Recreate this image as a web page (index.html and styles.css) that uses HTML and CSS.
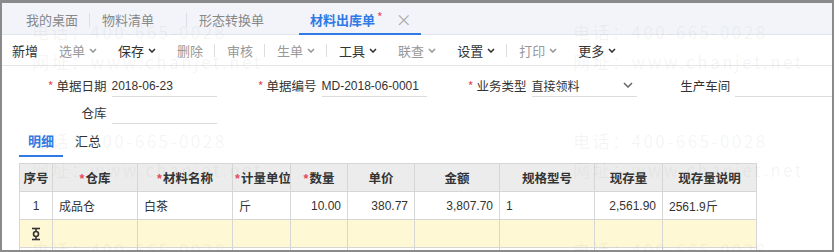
FILE: index.html
```html
<!DOCTYPE html>
<html lang="zh-CN">
<head>
  <meta charset="UTF-8">
  <meta name="viewport" content="width=device-width, initial-scale=1.0">
  <title>材料出库单</title>
  <link rel="stylesheet" href="styles.css">
</head>
<body>
  <div class="frame">
    <div class="tabs">
      <div class="tab first">我的桌面</div>
      <div class="tab sep">物料清单</div>
      <div class="tab sep">形态转换单</div>
      <div class="tab active">材料出库单<span class="dot">*</span><span class="close">×</span></div>
    </div>

    <div class="toolbar">
      <span class="btn">新增</span>
      <span class="btn off">选单<svg class="chev" viewBox="0 0 8 5"><polyline points="1,1 4,4 7,1"/></svg></span>
      <span class="btn">保存<svg class="chev" viewBox="0 0 8 5"><polyline points="1,1 4,4 7,1"/></svg></span>
      <span class="btn off">删除</span>
      <span class="bar"></span>
      <span class="btn off">审核</span>
      <span class="bar"></span>
      <span class="btn off">生单<svg class="chev" viewBox="0 0 8 5"><polyline points="1,1 4,4 7,1"/></svg></span>
      <span class="bar"></span>
      <span class="btn">工具<svg class="chev" viewBox="0 0 8 5"><polyline points="1,1 4,4 7,1"/></svg></span>
      <span class="btn off">联查<svg class="chev" viewBox="0 0 8 5"><polyline points="1,1 4,4 7,1"/></svg></span>
      <span class="btn">设置<svg class="chev" viewBox="0 0 8 5"><polyline points="1,1 4,4 7,1"/></svg></span>
      <span class="bar"></span>
      <span class="btn off">打印<svg class="chev" viewBox="0 0 8 5"><polyline points="1,1 4,4 7,1"/></svg></span>
      <span class="btn">更多<svg class="chev" viewBox="0 0 8 5"><polyline points="1,1 4,4 7,1"/></svg></span>
    </div>

    <div class="form">
      <div class="row">
        <div class="field">
          <label><i>*</i>单据日期</label>
          <div class="input">2018-06-23</div>
        </div>
        <div class="field">
          <label><i>*</i>单据编号</label>
          <div class="input">MD-2018-06-0001</div>
        </div>
        <div class="field">
          <label><i>*</i>业务类型</label>
          <div class="input select">直接领料<svg class="drop" viewBox="0 0 10 6"><polyline points="1,1 5,5 9,1"/></svg></div>
        </div>
        <div class="field">
          <label>生产车间</label>
          <div class="input wide"></div>
        </div>
      </div>
      <div class="row">
        <div class="field">
          <label>仓库</label>
          <div class="input"></div>
        </div>
      </div>
    </div>

    <div class="subtabs">
      <span class="subtab current">明细</span>
      <span class="subtab">汇总</span>
    </div>

    <table class="grid">
      <colgroup>
        <col style="width:33px"><col style="width:85px"><col style="width:95px"><col style="width:58px"><col style="width:57px">
        <col style="width:67px"><col style="width:85px"><col style="width:95px"><col style="width:68px"><col style="width:94px">
      </colgroup>
      <thead>
        <tr>
          <th>序号</th>
          <th><i>*</i>仓库</th>
          <th><i>*</i>材料名称</th>
          <th><i>*</i>计量单位</th>
          <th><i>*</i>数量</th>
          <th>单价</th>
          <th>金额</th>
          <th>规格型号</th>
          <th>现存量</th>
          <th>现存量说明</th>
        </tr>
      </thead>
      <tbody>
        <tr>
          <td class="c">1</td>
          <td>成品仓</td>
          <td>白茶</td>
          <td>斤</td>
          <td class="r">10.00</td>
          <td class="r">380.77</td>
          <td class="r">3,807.70</td>
          <td>1</td>
          <td class="r">2,561.90</td>
          <td>2561.9斤</td>
        </tr>
        <tr class="total">
          <td class="c"><svg class="sum" viewBox="0 0 10 14"><line x1="1" y1="1.5" x2="9" y2="1.5"/><line x1="1" y1="12.5" x2="9" y2="12.5"/><line x1="5" y1="1.5" x2="5" y2="4.5"/><line x1="5" y1="9.5" x2="5" y2="12.5"/><circle cx="5" cy="7" r="2.5"/></svg></td>
          <td></td><td></td><td></td><td></td><td></td><td></td><td></td><td></td><td></td>
        </tr>
        <tr>
          <td></td><td></td><td></td><td></td><td></td><td></td><td></td><td></td><td></td><td></td>
        </tr>
      </tbody>
    </table>

    <div class="watermark">
      <span class="wm t1">电话：400-665-0028</span>
      <span class="wm t2">电话：400-665-0028</span>
      <span class="wm w1">网址：www.chanjet.net</span>
      <span class="wm w2">网址：www.chanjet.net</span>
      <span class="wm t3">电话：400-665-0028</span>
      <span class="wm t4">电话：400-665-0028</span>
      <span class="wm w3">网址：www.chanjet.net</span>
      <span class="wm w4">网址：www.chanjet.net</span>
      <span class="wm t5">电话：400-665-0028</span>
      <span class="wm t6">电话：400-665-0028</span>
    </div>
  </div>
</body>
</html>
```

FILE: styles.css
```css
body {
  margin: 0;
  font-family: "Liberation Sans", "Noto Sans CJK SC", sans-serif;
  font-size: 12px;
  color: #333;
  background: #fff;
}
i {
  font-style: normal;
  color: #e8475c;
  margin-right: 3px;
}
.frame {
  position: relative;
  width: 834px;
  height: 252px;
  box-sizing: border-box;
  border: 2px solid #8a8a8a;
  border-top-width: 3px;
  overflow: hidden;
}

/* top tabs */
.tabs {
  display: flex;
  height: 31px;
  background: #f2f4f9;
  border-bottom: 1px solid #e2e5ee;
  font-family: "Noto Sans CJK SC", sans-serif;
  font-size: 13px;
  color: #888;
}
.tab {
  display: flex;
  align-items: center;
  position: relative;
  padding-top: 2px;
}
.tab.first {
  padding: 2px 11px 0 24px;
}
.tab.sep {
  padding: 2px 32px 0 13px;
}
.tab.sep + .tab.sep {
  padding-right: 35px;
}
.tab.sep::before {
  content: "";
  position: absolute;
  left: 0;
  top: 10px;
  height: 14px;
  width: 1px;
  background: #dcdfe6;
}
.tab.active {
  width: 122px;
  box-sizing: border-box;
  padding-left: 11px;
  color: #2f7ae5;
  font-weight: bold;
  border-bottom: 2px solid #2f7ae5;
  margin-bottom: -1px;
}
.tab .dot {
  color: #e8475c;
  font-weight: normal;
  font-size: 12px;
  margin: -6px 0 0 2px;
}
.tab .close {
  color: #aaa;
  font-weight: normal;
  font-size: 16px;
  margin-left: 13px;
}

/* toolbar */
.toolbar {
  display: flex;
  align-items: center;
  height: 29px;
  padding: 1px 0 0 10px;
  border-bottom: 1px solid #e6e6e6;
  font-family: "Noto Sans CJK SC", sans-serif;
  font-size: 13px;
}
.btn {
  display: flex;
  align-items: center;
  margin-right: 21px;
  color: #333;
}
.btn.off {
  color: #999;
}
.chev {
  width: 8px;
  height: 5px;
  margin-left: 4px;
  fill: none;
  stroke: currentColor;
  stroke-width: 1.6;
}
.bar {
  width: 1px;
  height: 13px;
  background: #ddd;
  margin: 0 12px 0 -10px;
}

/* header form */
.form {
  padding: 9px 0 0 5px;
}
.row {
  display: flex;
  height: 27px;
}
.field {
  display: flex;
  align-items: flex-start;
  width: 210px;
  flex: none;
}
.field label {
  width: 100px;
  text-align: right;
  line-height: 22px;
  font-family: "Noto Sans CJK SC", sans-serif;
  font-size: 12.5px;
  color: #333;
}
.input {
  position: relative;
  width: 106px;
  height: 21px;
  margin-left: 5px;
  line-height: 22px;
  border-bottom: 1px solid #dcdcdc;
  color: #333;
  white-space: nowrap;
}
.input.wide {
  width: 120px;
}
.input.select {
  font-family: "Noto Sans CJK SC", sans-serif;
}
.drop {
  position: absolute;
  right: 4px;
  top: 7px;
  width: 10px;
  height: 6px;
  fill: none;
  stroke: #666;
  stroke-width: 1.5;
}

/* detail tabs */
.subtabs {
  display: flex;
  height: 26px;
  margin: 0 0 8px 17px;
  font-family: "Noto Sans CJK SC", sans-serif;
  font-size: 13px;
}
.subtab {
  padding: 2px 9px 0;
  color: #333;
  margin-right: 3px;
}
.subtab.current {
  color: #2f7ae5;
  font-weight: bold;
  border-bottom: 2px solid #2f7ae5;
  height: 24px;
}

/* grid */
.grid {
  margin-left: 17px;
  border-collapse: collapse;
  table-layout: fixed;
  width: 737px;
}
.grid th, .grid td {
  height: 27px;
  padding: 0 6px;
  border: 1px solid #d6d6d6;
  white-space: nowrap;
  overflow: hidden;
}
.grid th {
  padding: 0 2px;
  background: #ececec;
  font-weight: bold;
  font-size: 12.5px;
  text-align: center;
}
.grid th i {
  margin-right: 1px;
}
.grid td {
  font-size: 12px;
  font-family: "Liberation Sans", "Noto Sans CJK SC", sans-serif;
}
.grid td.c {
  text-align: center;
}
.grid td.r {
  text-align: right;
}
.grid tr.total td {
  background: #fff8d4;
}
.sum {
  width: 10px;
  height: 14px;
  vertical-align: middle;
  fill: none;
  stroke: #333;
  stroke-width: 1.6;
}

/* watermark over the page */
.watermark {
  position: absolute;
  inset: 0;
  pointer-events: none;
}
.wm {
  position: absolute;
  font-family: "Noto Sans CJK SC", sans-serif;
  font-size: 17px;
  letter-spacing: 2.5px;
  color: rgba(140, 140, 140, 0.09);
  white-space: nowrap;
}
.t1 { left: 30px; top: 16px; }
.t2 { left: 571px; top: 16px; }
.w1 { left: 30px; top: 46px; }
.w2 { left: 571px; top: 46px; }
.t3 { left: 30px; top: 125px; }
.t4 { left: 571px; top: 125px; }
.w3 { left: 30px; top: 154px; }
.w4 { left: 571px; top: 154px; }
.t5 { left: 30px; top: 234px; }
.t6 { left: 571px; top: 234px; }
```
